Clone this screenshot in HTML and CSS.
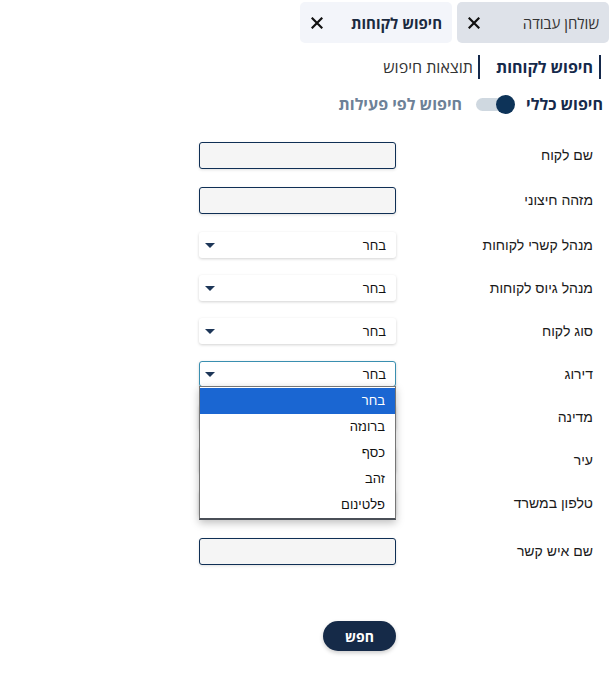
FILE: index.html
```html
<!DOCTYPE html>
<html lang="he" dir="rtl">
<head>
<meta charset="utf-8">
<link rel="stylesheet" href="styles.css">
</head>
<body>
<div class="tabs">
  <div class="tab tab-inactive">
    <span class="tab-title">שולחן עבודה</span>
    <svg class="x" viewBox="0 0 12 12" width="12" height="12"><path d="M1.5 1.5L10.5 10.5M10.5 1.5L1.5 10.5" stroke="#111" stroke-width="2.2" stroke-linecap="square"/></svg>
  </div>
  <div class="tab tab-active">
    <span class="tab-title bold">חיפוש לקוחות</span>
    <svg class="x" viewBox="0 0 12 12" width="12" height="12"><path d="M1.5 1.5L10.5 10.5M10.5 1.5L1.5 10.5" stroke="#111" stroke-width="2.2" stroke-linecap="square"/></svg>
  </div>
</div>

<div class="subtabs">
  <span class="subtab current">חיפוש לקוחות</span>
  <span class="subtab">תוצאות חיפוש</span>
</div>

<div class="mode">
  <span class="mode-on">חיפוש כללי</span>
  <span class="switch"><span class="knob"></span></span>
  <span class="mode-off">חיפוש לפי פעילות</span>
</div>

<div class="form">
  <div class="row r-in"><label class="lbl">שם לקוח</label><div class="inp"></div></div>
  <div class="row r-in"><label class="lbl">מזהה חיצוני</label><div class="inp"></div></div>
  <div class="row"><label class="lbl">מנהל קשרי לקוחות</label><div class="sel"><span>בחר</span><i class="caret"></i></div></div>
  <div class="row"><label class="lbl">מנהל גיוס לקוחות</label><div class="sel"><span>בחר</span><i class="caret"></i></div></div>
  <div class="row"><label class="lbl">סוג לקוח</label><div class="sel"><span>בחר</span><i class="caret"></i></div></div>
  <div class="row r-open"><label class="lbl">דירוג</label>
    <div class="sel sel-open"><span>בחר</span><i class="caret"></i>
      <ul class="listbox">
        <li class="opt hl">בחר</li>
        <li class="opt">ברונזה</li>
        <li class="opt">כסף</li>
        <li class="opt">זהב</li>
        <li class="opt">פלטינום</li>
      </ul>
    </div>
  </div>
  <div class="row"><label class="lbl">מדינה</label><div class="sel covered"><span>בחר</span><i class="caret"></i></div></div>
  <div class="row"><label class="lbl">עיר</label><div class="sel covered"><span>בחר</span><i class="caret"></i></div></div>
  <div class="row"><label class="lbl">טלפון במשרד</label><div class="sel covered"><span>בחר</span><i class="caret"></i></div></div>
  <div class="row r-in r-last"><label class="lbl">שם איש קשר</label><div class="inp"></div></div>
</div>

<div class="actions"><button class="btn">חפש</button></div>
</body>
</html>
```
FILE: styles.css
```css
html, body { margin: 0; padding: 0; background: #fff; }
body {
  width: 614px;
  height: 695px;
  overflow: hidden;
  direction: rtl;
  font-family: "Open Sans", "Liberation Sans", sans-serif;
  color: #1b1b1b;
}
.tabs {
  display: flex;
  gap: 5px;
  padding: 2px 5px 0 0;
}
.tab {
  width: 152px;
  height: 41px;
  box-sizing: border-box;
  border-radius: 5px;
  display: flex;
  align-items: center;
  justify-content: space-between;
  padding: 0 10px 0 11px;
  font-size: 15px;
}
.tab-inactive { background: #dee2e9; color: #333; }
.tab-active { background: #f3f5fa; color: #1b2a3f; }
.bold { font-weight: 700; }
.x { display: block; }

.subtabs {
  display: flex;
  align-items: center;
  gap: 16px;
  margin-top: 12px;
  padding-right: 13px;
  height: 24px;
}
.subtab {
  font-size: 16px;
  line-height: 24px;
  padding-right: 5px;
  border-right: 2px solid #15294b;
  color: #333;
}
.subtab.current {
  padding-right: 6px;
  font-weight: 700;
  color: #15294b;
}
.mode {
  display: flex;
  align-items: center;
  margin-top: 14px;
  padding-right: 11px;
  height: 22px;
  font-weight: 700;
  font-size: 16px;
}
.mode-on { color: #15294b; }
.mode-off { color: #6d8197; }
.switch {
  position: relative;
  width: 36px;
  height: 13px;
  border-radius: 7px;
  background: #cfd8e0;
  margin: 0 14px 0 14px;
}
.knob {
  position: absolute;
  right: -3px;
  top: -3px;
  width: 19px;
  height: 19px;
  border-radius: 50%;
  background: #0d3358;
}

.form {
  margin-top: 26px;
  padding-right: 21px;
  display: flex;
  flex-direction: column;
  gap: 17px;
  font-family: "Liberation Sans", Arial, sans-serif;
}
.row {
  display: flex;
  align-items: center;
  height: 26px;
}
.r-in { height: 28px; }
.r-in + .row:not(.r-in) { margin-top: 1px; }
.r-last { margin-top: 4px; }
.lbl {
  width: 197px;
  font-size: 14px;
  color: #1a1a1a;
  flex: none;
}
.inp {
  width: 197px;
  height: 27px;
  box-sizing: border-box;
  border: 1px solid #0f2f55;
  border-radius: 3px;
  background: #f5f5f5;
  box-shadow: 0 1px 3px rgba(0,0,0,0.12);
}
.sel {
  position: relative;
  width: 197px;
  height: 26px;
  box-sizing: border-box;
  border-radius: 3px;
  background: #fff;
  box-shadow: 0 1px 3px rgba(0,0,0,0.18);
  display: flex;
  align-items: center;
  justify-content: space-between;
  padding: 0 10px 0 6px;
  font-size: 13px;
  color: #111;
}
.covered span { visibility: hidden; }
.sel-open {
  border: 1px solid #3a8fb0;
  padding: 0 9px 0 5px;
}
.caret {
  width: 0;
  height: 0;
  border-left: 5px solid transparent;
  border-right: 5px solid transparent;
  border-top: 5px solid #1d3658;
}
.listbox {
  position: absolute;
  top: 24px;
  left: -1px;
  width: 197px;
  box-sizing: border-box;
  margin: 0;
  padding: 1px 0 0;
  list-style: none;
  background: #fff;
  border: 1px solid #767676;
  border-bottom: 2px solid #4a4f57;
  box-shadow: 0 3px 8px rgba(0,0,0,0.25);
  z-index: 5;
}
.opt {
  height: 26px;
  line-height: 26px;
  padding: 0 10px;
  font-size: 13px;
  color: #111;
}
.opt.hl { background: #1a66d2; color: #fff; }

.actions {
  padding-right: 218px;
  margin-top: 56px;
}
.btn {
  width: 73px;
  height: 30px;
  border: none;
  border-radius: 15px;
  background: #152a48;
  color: #fff;
  font-family: "Open Sans", "Liberation Sans", sans-serif;
  font-weight: 700;
  font-size: 14px;
  box-shadow: 0 2px 4px rgba(0,0,0,0.2);
}
```
